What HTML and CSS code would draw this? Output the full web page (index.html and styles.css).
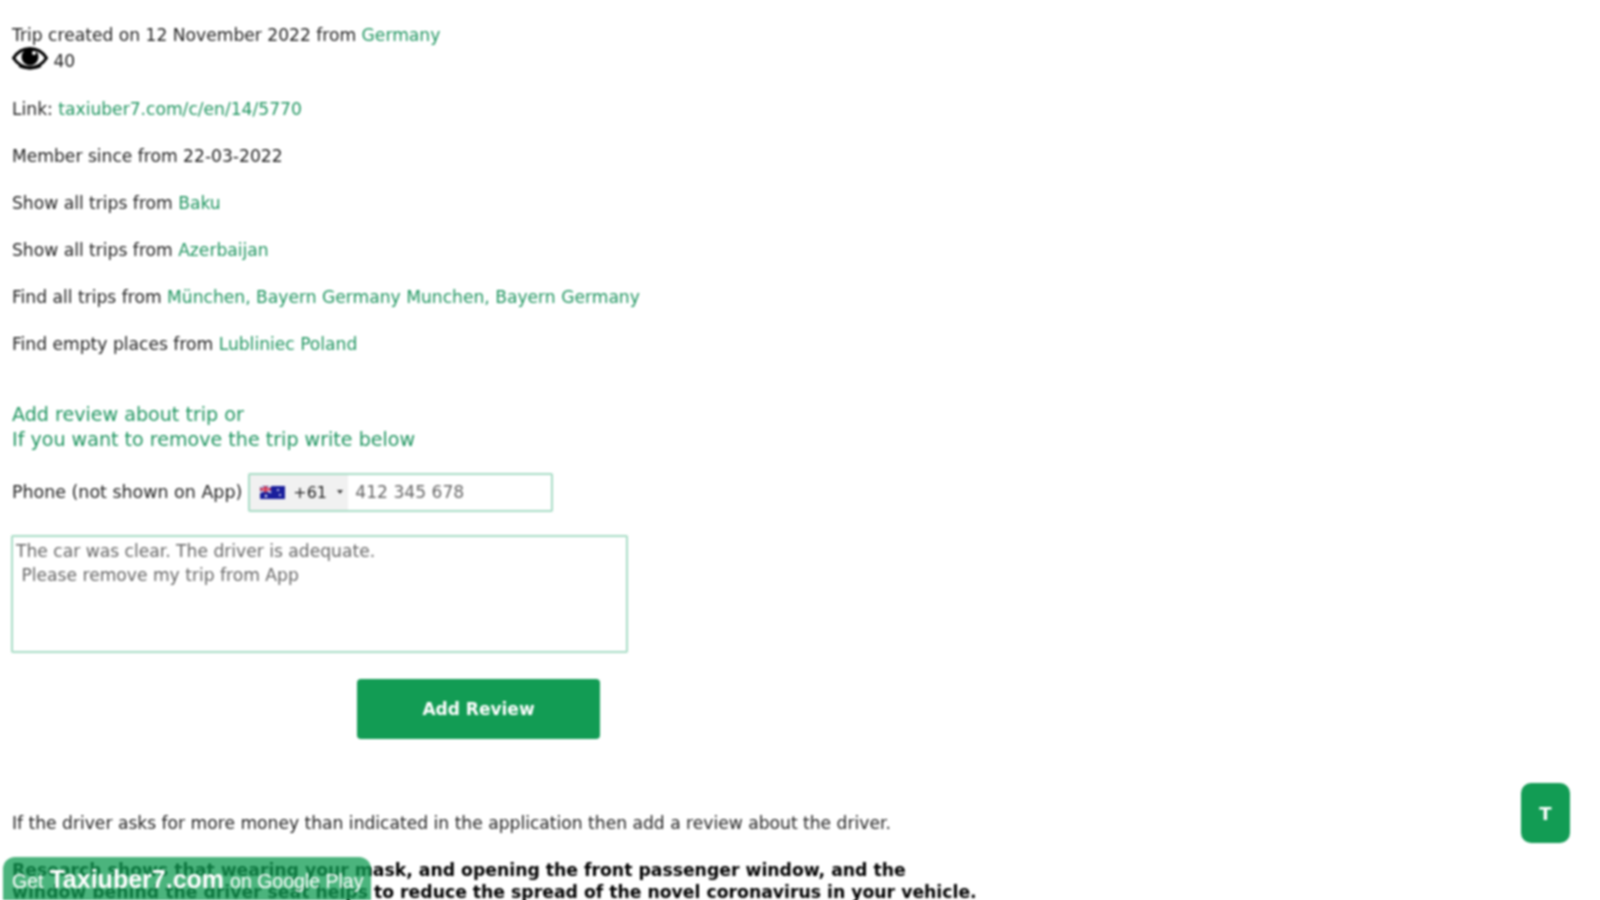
FILE: index.html
```html
<!DOCTYPE html>
<html lang="en">
<head>
<meta charset="utf-8">
<title>Trip</title>
<link rel="stylesheet" href="styles.css">
</head>
<body>
<main class="page">
  <p class="info">Trip created on 12 November 2022 from <a href="#">Germany</a><br>
    <svg class="eye" viewBox="0 0 36 24" width="36" height="24" aria-hidden="true"><path d="M1.5 12C6 5 12 2.5 18 2.5S30 5 34.500 12C30 19 24 21.500 18 21.500S6 19 1.500 12Z" fill="#fff" stroke="#000" stroke-width="3"/><circle cx="18" cy="11" r="8.500" fill="#000"/><circle cx="22" cy="7" r="2" fill="#fff"/><path d="M7 20c6 3.500 16 3.500 22 0" fill="none" stroke="#000" stroke-width="2"/></svg> 40</p>
  <p class="info">Link: <a href="#">taxiuber7.com/c/en/14/5770</a></p>
  <p class="info">Member since from 22-03-2022</p>
  <p class="info">Show all trips from <a href="#">Baku</a></p>
  <p class="info">Show all trips from <a href="#">Azerbaijan</a></p>
  <p class="info">Find all trips from <a href="#">München, Bayern Germany</a> <a href="#">Munchen, Bayern Germany</a></p>
  <p class="info">Find empty places from <a href="#">Lubliniec Poland</a></p>
  <h2 class="review-title">Add review about trip or<br>If you want to remove the trip write below</h2>
  <form class="review-form">
    <div class="phone-row">
      <label class="phone-label">Phone (not shown on App)</label>
      <div class="phone-input">
        <div class="dial">
          <svg class="flag" viewBox="0 0 25 13" width="25" height="13" aria-hidden="true"><rect width="25" height="13" fill="#1a1f9c"/><rect width="11" height="6.500" fill="#2a2a8c"/><path d="M0 0l11 6.500M11 0L0 6.500" stroke="#fff" stroke-width="1.500"/><path d="M5.500 0v6.500M0 3.250h11" stroke="#e0314a" stroke-width="2"/><circle cx="18" cy="4" r="1" fill="#fff"/><circle cx="20" cy="9" r="1" fill="#fff"/><circle cx="6" cy="10" r="1.200" fill="#fff"/></svg>
          <span>+61</span><span class="caret"></span>
        </div>
        <span class="placeholder">412 345 678</span>
      </div>
    </div>
    <textarea class="review-text" placeholder="The car was clear. The driver is adequate.&#10; Please remove my trip from App"></textarea>
    <button class="add-btn" type="button">Add Review</button>
  </form>
  <p class="note">If the driver asks for more money than indicated in the application then add a review about the driver.</p>
  <p class="research">Research shows that wearing your mask, and opening the front passenger window, and the<br>window behind the driver seat helps to reduce the spread of the novel coronavirus in your vehicle.</p>
</main>
<a class="top-btn" href="#">T</a>
<a class="play-banner" href="#">Get <b>Taxiuber7.com</b> on Google Play</a>
</body>
</html>
```
FILE: styles.css
```css
html, body { margin: 0; height: 100%; overflow: hidden; background: #fff; }
body { font-family: "DejaVu Sans", Verdana, sans-serif; font-size: 17.14px; color: #222; }
.page { padding: 22px 0 0 12px; filter: blur(0.8px); }
a { color: #1f9560; text-decoration: none; }
.info { margin: 0 0 21px; line-height: 26px; white-space: nowrap; }
.info:first-child { margin-bottom: 21.500px; }
.eye { vertical-align: -3px; margin-top: -8px; }
.review-title { margin: 45px 0 0; font-weight: 400; font-size: 19.1px; line-height: 25.500px; color: #1f9560; }
.review-form { margin: 0; }
.phone-row { display: flex; align-items: center; gap: 6px; margin-top: 20px; }
.phone-label { font-size: 17.450px; }
.phone-input { display: flex; width: 301px; height: 35px; border: 2px solid #a7dcc5; border-radius: 2px; background: #fff; }
.dial { display: flex; align-items: center; gap: 8px; width: 98px; padding-left: 10px; box-sizing: border-box; background: #f1f1f1; font-size: 16px; }
.caret { width: 0; height: 0; margin-left: 2px; border: 3px solid transparent; border-top: 4px solid #444; border-bottom: 0; }
.placeholder { align-self: center; padding-left: 7px; color: #666; }
.review-text { display: block; box-sizing: border-box; width: 617px; height: 118px; margin: 23px 0 0 -1px; padding: 2.500px 3px 2px; border: 2px solid #a7dcc5; border-radius: 2px; font: inherit; line-height: 24px; resize: none; outline: 0; }
.review-text::placeholder { color: #666; opacity: 1; }
.add-btn { display: block; width: 243px; height: 60px; margin: 26px 0 0 345px; border: 0; border-radius: 4px; background: #129c54; color: #fff; font: 700 17px "DejaVu Sans", sans-serif; }
.note { margin: 72px 0 0; line-height: 24px; }
.research { margin: 24px 0 0; font-size: 17.25px; font-weight: 700; line-height: 22.500px; color: #000; white-space: nowrap; }
.top-btn { position: fixed; right: 30px; bottom: 57px; display: flex; align-items: center; justify-content: center; width: 49px; height: 60px; border-radius: 10px; background: #129c54; color: #fff; font-weight: 700; font-size: 18px; filter: blur(0.8px); }
.play-banner { position: fixed; left: 3px; bottom: 0; display: flex; align-items: baseline; gap: 6px; box-sizing: border-box; width: 368px; height: 43px; padding: 8px 0 0 9px; border-radius: 12px 12px 0 0; background: rgba(18, 156, 84, 0.76); color: #fff; font: 19.5px "Liberation Sans", sans-serif; white-space: nowrap; filter: blur(0.8px); }
.play-banner b { font-size: 25px; font-weight: 700; }
```
